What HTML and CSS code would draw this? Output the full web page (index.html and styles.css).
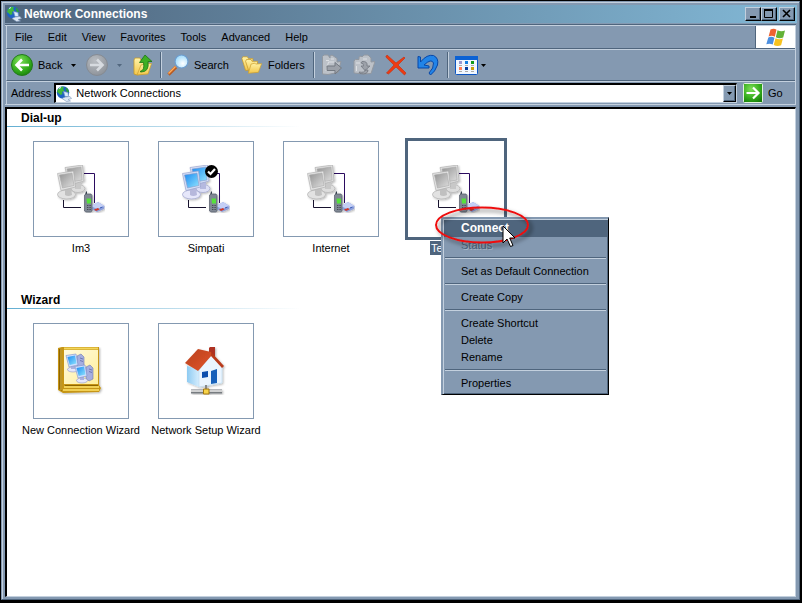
FILE: index.html
```html
<!DOCTYPE html>
<html lang="en">
<head>
<meta charset="utf-8">
<title>Network Connections</title>
<link rel="stylesheet" href="styles.css">
</head>
<body>
<svg class="defs" aria-hidden="true">
  <defs>
    <linearGradient id="gray-screen" x1="0" y1="0" x2="1" y2="1"><stop offset="0" stop-color="#949494"/><stop offset="1" stop-color="#dedede"/></linearGradient>
    <linearGradient id="blue-screen" x1="0" y1="0" x2="1" y2="1"><stop offset="0" stop-color="#1c8af0"/><stop offset="1" stop-color="#8fe4ff"/></linearGradient>
    <linearGradient id="gold" x1="0" y1="0" x2="1" y2="1"><stop offset="0" stop-color="#fffbe0"/><stop offset="1" stop-color="#ffee9a"/></linearGradient>
    <linearGradient id="folder" x1="0" y1="0" x2="0" y2="1"><stop offset="0" stop-color="#fff3a8"/><stop offset="1" stop-color="#f3c64a"/></linearGradient>
    <radialGradient id="green" cx=".4" cy=".3" r=".8"><stop offset="0" stop-color="#7fe05a"/><stop offset=".6" stop-color="#34ac1c"/><stop offset="1" stop-color="#147a08"/></radialGradient>
    <radialGradient id="gray-ball" cx=".4" cy=".3" r=".8"><stop offset="0" stop-color="#b9bdc2"/><stop offset="1" stop-color="#8a8f96"/></radialGradient>
    <radialGradient id="lens" cx=".6" cy=".65" r=".6"><stop offset="0" stop-color="#ffffff"/><stop offset="1" stop-color="#a6ddfb"/></radialGradient>
    <linearGradient id="roof" x1="0" y1="0" x2="1" y2="1"><stop offset="0" stop-color="#b8401c"/><stop offset="1" stop-color="#e2562c"/></linearGradient>
    <linearGradient id="wall" x1="0" y1="0" x2="1" y2="0"><stop offset="0" stop-color="#8ecbf2"/><stop offset="1" stop-color="#d5edfd"/></linearGradient>
    <filter id="soft" x="-20%" y="-20%" width="150%" height="150%"><feDropShadow dx="1" dy="1" stdDeviation="1" flood-opacity=".3"/></filter>
    <filter id="ring-shadow" x="-20%" y="-40%" width="150%" height="190%"><feDropShadow dx="3" dy="3" stdDeviation="2" flood-opacity=".55"/></filter>
    <symbol id="globe" viewBox="0 0 16 16">
      <circle cx="7" cy="6.5" r="6.2" fill="#1f63c4"/>
      <path d="M2 3 5 .7 8 1 7 3 8.5 4.500 6 6 6.500 8 4.500 9 2.500 7 1 6z" fill="#40b83c"/>
      <path d="M9.500 1.200 12 3 13 6 11 6.500 10 4z" fill="#2d9c3c"/>
      <path d="M3 2.500 5 1.500" stroke="#d6f6ff" stroke-width="1"/>
      <path d="M7.500 5.500 12 6.500 12.500 10.500 9 10.500z" fill="#d8ecff" stroke="#7594bb" stroke-width=".7"/>
      <path d="M9.500 11 14 10.500 15.500 12.500 12 13.500 14.500 15 10.500 15.500 6 12.500 8 11.500z" fill="#dbe7f4" stroke="#7c96b8" stroke-width=".6"/>
    </symbol>
    <symbol id="link-base" viewBox="0 0 48 48">
      <path d="M27 8.500h10.500V38" fill="none" stroke="#2b0b60"/>
      <path d="M6.500 35v7.500H24" fill="none" stroke="#17122e"/>
      <g filter="url(#soft)">
        <path d="M34 41 41 37 47.500 41 47 44 40 47 34 44z" fill="#8ea0da"/>
        <path d="M34 41 41 37 47.500 41 40 44z" fill="#c4cff6"/>
        <path d="M37 44.500 41 43 42.500 44.500 39 46z" fill="#cf3528"/><path d="M43 43 45.500 42" stroke="#385bb6"/>
        <path d="M29 26.500h1V30h-2z" fill="#333d4b"/>
        <path d="M27.500 30 29 29h5l1 1.500V46l-1.500 1H29l-1.500-1z" fill="#808894" stroke="#565e6b" stroke-width=".7"/>
        <path d="M29.500 33.500h4.500v5h-4z" fill="#55e13a"/>
        <path d="M30 40.500h4M30 42.500h4M30 44.500h4" stroke="#464c57" stroke-dasharray="1 .6"/>
      </g>
    </symbol>
    <symbol id="net-gray" viewBox="0 0 48 48">
      <use href="#link-base" width="48" height="48"/>
      <g filter="url(#soft)" stroke="#aaa" stroke-width=".6">
        <ellipse cx="21" cy="23.500" rx="7" ry="4" fill="#ddd"/>
        <path d="M18 17h6v7h-6z" fill="#c8c8c8" stroke="none"/>
        <path d="M8 2.500 25.500 0 27 16 12 20z" fill="#dedede"/>
        <path d="M10 4 24 2 25 15 13 17z" fill="url(#gray-screen)"/>
        <ellipse cx="9.500" cy="29.500" rx="9" ry="4.500" fill="#e2e2e2"/>
        <path d="M8 23h6l1 7q-4 2-7 0z" fill="#c0c0c0" stroke="none"/>
        <path d="M.5 8.500 16.500 6 18.500 22 4 25.500z" fill="#e4e4e4"/>
        <path d="M2.500 10 15 8 17 20.500 5.500 23z" fill="url(#gray-screen)"/>
      </g>
    </symbol>
    <symbol id="net-blue" viewBox="0 0 48 48">
      <use href="#link-base" width="48" height="48"/>
      <g filter="url(#soft)" stroke="#9298c6" stroke-width=".6">
        <ellipse cx="21" cy="23.500" rx="7" ry="4" fill="#dddff6"/>
        <path d="M18 17h6v7h-6z" fill="#b5b9df" stroke="none"/>
        <path d="M8 2.500 25.500 0 27 16 12 20z" fill="#d7e4fa"/>
        <path d="M10 4 24 2 25 15 13 17z" fill="url(#blue-screen)"/>
        <ellipse cx="9.500" cy="29.500" rx="9" ry="4.500" fill="#e6e7fa"/>
        <path d="M8 23h6l1 7q-4 2-7 0z" fill="#b6b8dc" stroke="none"/>
        <path d="M.5 8.500 16.500 6 18.500 22 4 25.500z" fill="#d4e2fa"/>
        <path d="M2.500 10 15 8 17 20.500 5.500 23z" fill="url(#blue-screen)"/>
      </g>
      <circle cx="29.500" cy="6.500" r="6.500" fill="#000"/>
      <path d="M26 6.500 28.500 9 33 4" fill="none" stroke="#fff" stroke-width="2.200"/>
    </symbol>
    <symbol id="mini-pc" viewBox="0 0 20 20">
      <path d="M12 3 16 1 19 4v11l-4 2-3-3z" fill="#a5aee0" stroke="#7078b0" stroke-width=".6"/>
      <path d="M15 5 18 6M15 7.500 18 8.500" stroke="#5661a2" stroke-width=".7"/>
      <ellipse cx="8" cy="16.500" rx="5.500" ry="2.500" fill="#e4e6fc" stroke="#8c94c8" stroke-width=".6"/>
      <path d="M6 12h4v4H6z" fill="#aab1de"/>
      <path d="M1 2.500 11 1 13 12 4 14z" fill="#cfdfff" stroke="#7d8ec8" stroke-width=".6"/>
      <path d="M2.500 4 10 2.500 11.500 10.500 4.700 12z" fill="url(#blue-screen)"/>
    </symbol>
    <symbol id="folder-open" viewBox="0 0 24 22">
      <path d="M1 4 2 2h5l1 2h5v12l-8 1z" fill="url(#folder)" stroke="#c79a2a" stroke-width=".8"/>
      <path d="M5 7 6 5h5l1 2h6v10l-9 2z" fill="url(#folder)" stroke="#c79a2a" stroke-width=".8"/>
      <path d="M8 20 11 10l4-1 1 1 6.500-.5L19 19z" fill="url(#folder)" stroke="#cfa232" stroke-width=".8"/>
    </symbol>
  </defs>
</svg>

<main class="window">
  <header class="titlebar">
    <svg class="icon16"><use href="#globe"/></svg>
    <h1 class="title">Network Connections</h1>
    <div class="controls">
      <button class="control" aria-label="Minimize"><svg viewBox="0 0 12 10"><path d="M3 8h6" stroke="#000" stroke-width="2"/></svg></button>
      <button class="control" aria-label="Maximize"><svg viewBox="0 0 12 10"><path d="M1.500 1v7.500h8V1" fill="none" stroke="#000"/><path d="M1 1h9" stroke="#000" stroke-width="2"/></svg></button>
      <button class="control control-close" aria-label="Close"><svg viewBox="0 0 12 10"><path d="M2 1 9 8M9 1 2 8" stroke="#000" stroke-width="1.600"/></svg></button>
    </div>
  </header>

  <div class="rebar">
    <div class="band menu-band">
      <nav class="menubar">
        <button>File</button><button>Edit</button><button>View</button><button>Favorites</button><button>Tools</button><button>Advanced</button><button>Help</button>
      </nav>
      <div class="brand">
        <svg viewBox="0 0 20 19">
          <path d="M4.500 1.500q3.500-1.500 6 .3L8.800 8.700q-3-1.700-6.200-.2z" fill="#ef6331"/>
          <path d="M11.500 2.300q3.500 1.800 7.500.3L17.200 9.500q-4 1.500-7.400-.3z" fill="#63b236"/>
          <path d="M2.300 9.500q3-1.500 6.200.3L6.700 16.500q-3-1.600-6.400-.2z" fill="#4b8fe0"/>
          <path d="M9.500 10.300q3.500 1.700 7.400.3l-1.800 6.700q-4 1.500-7.400-.4z" fill="#f7c21e"/>
        </svg>
      </div>
    </div>

    <div class="band toolbar">
      <button class="tool nav-back"><svg class="icon22" viewBox="0 0 22 22"><circle cx="11" cy="11" r="10.500" fill="url(#green)" stroke="#237a1c"/><path d="M18 11H6M11 5.500 5.500 11 11 16.500" fill="none" stroke="#fff" stroke-width="2.600"/></svg><span>Back</span><svg class="caret" viewBox="0 0 5 3"><path d="M0 0h5L2.500 3z"/></svg></button>
      <button class="tool nav-forward" aria-label="Forward" disabled><svg class="icon22" viewBox="0 0 22 22"><circle cx="11" cy="11" r="10.500" fill="url(#gray-ball)" stroke="#858b93"/><path d="M4 11H16M11 5.500 16.500 11 11 16.500" fill="none" stroke="#d7dbe0" stroke-width="2.600"/></svg><svg class="caret" viewBox="0 0 5 3"><path d="M0 0h5L2.500 3z" fill="#52677f"/></svg></button>
      <button class="tool nav-up" aria-label="Up"><svg class="icon22" viewBox="0 0 22 22"><path d="M2 6 3 4h5l1 2h7v12l-11 3-3-1z" fill="url(#folder)" stroke="#c79a2a" stroke-width=".8"/><path d="M5 21 9 11l4-1 6.500-.5L16 20z" fill="url(#folder)" stroke="#cfa232" stroke-width=".8"/><path d="M8 17.500q5-1 3.500-9H7.500L13 1l7 6.500h-4Q17.500 18 9 18z" fill="#3eaf24" stroke="#1b7512" stroke-width=".8"/></svg></button>
      <span class="divider"></span>
      <button class="tool search"><svg class="icon22" viewBox="0 0 22 22"><path d="M1.500 20.500 9 13" stroke="#b85c24" stroke-width="3.200"/><path d="M1.500 19.500 8.500 12.500" stroke="#ffad5c" stroke-width="1.500"/><circle cx="14.500" cy="7.500" r="6.500" fill="url(#lens)" stroke="#6c9ed0" stroke-width="1.200"/></svg><span>Search</span></button>
      <button class="tool folders"><svg class="icon22"><use href="#folder-open"/></svg><span>Folders</span></button>
      <span class="divider"></span>
      <button class="tool glyph" aria-label="Move To" disabled><svg class="icon22" viewBox="0 0 22 22"><path d="M1.500 20V2.500L3 1h4l2 3V2l2-1 5 3.500V8l4-.5-3 11L7 20.500z" fill="#bcc1c8" stroke="#9298a0"/><path d="M5 6.500h3M5 17 7.500 8H13M10 5h3" stroke="#dde0e4" fill="none"/><path d="M6 12h8V8.500L20.500 14 14 20v-3.500H6z" fill="#9ca1a9" stroke="#737981"/></svg></button>
      <button class="tool glyph" aria-label="Copy To" disabled><svg class="icon22" viewBox="0 0 22 22"><path d="M1 19V7l1.500-1.500H6V3l2-1 1 1 2-2h4l3 3v4l4-.5-4 12-7 .5z" fill="#bcc1c8" stroke="#9298a0"/><path d="M3 9h4M10 5h4M3.500 12v5" stroke="#dde0e4"/><path d="M9 7.500Q15 7 14 12h3l-5 4.500L8 12h2.500Q11 9 8 9zM6 18q6 1 6-2h3q0 5-8 3.500z" fill="#9ca1a9" stroke="#737981" stroke-width=".8"/></svg></button>
      <button class="tool glyph" aria-label="Delete"><svg class="icon22" viewBox="0 0 22 22"><path d="M2 1 11 9 19 3l1 1-7 7 8 8-1.500 2L11 13 3.500 20 1.500 19 9 11 .8 3z" fill="#ee3b12" stroke="#c82b0a" stroke-width=".6"/></svg></button>
      <button class="tool glyph" aria-label="Undo"><svg class="icon22" viewBox="0 0 22 22"><path d="M1 2.500 3.500 3v5Q10 0 16.500 1.500 22 4 20.500 11 18 18 13.500 21L12 19q5-5 4.500-10-2-5-9.500 2l5 1v2H1z" fill="#2184e8" stroke="#0747a8"/></svg></button>
      <span class="divider"></span>
      <button class="tool views" aria-label="Views"><svg class="views-icon" viewBox="0 0 23 19"><rect x=".5" y=".5" width="22" height="18" rx="1" fill="#f1f7ff" stroke="#0c56c4"/><path d="M0 0h23v4H0z" fill="#0b62d4"/><path d="M4 5h3v3H4z" fill="#9898d0"/><path d="M10 5h3v3h-3z" fill="#147ee0"/><path d="M16 5h3v3h-3z" fill="#139a18"/><path d="M4 11h3v3H4z" fill="#ff7d55"/><path d="M10 11h3v3h-3z" fill="#083e9b"/><path d="M16 11h3v3h-3z" fill="#cba009"/><path d="M4 9.500h3m3 0h3m3 0h3M4 15.500h3m3 0h3m3 0h3" stroke="#aaa"/></svg><svg class="caret" viewBox="0 0 5 3"><path d="M0 0h5L2.500 3z"/></svg></button>
    </div>

    <div class="band address-band">
      <label for="address">Address</label>
      <div class="combo">
        <svg class="icon16"><use href="#globe"/></svg>
        <input id="address" type="text" value="Network Connections">
        <button class="drop" aria-label="Show addresses"><svg class="caret" viewBox="0 0 5 3"><path d="M0 0h5L2.500 3z"/></svg></button>
      </div>
      <button class="go"><svg class="go-icon" viewBox="0 0 20 20"><rect x=".5" y=".5" width="19" height="19" rx="1" fill="url(#green)" stroke="#e2f3df"/><path d="M3.500 10H15M10 4.500 15.500 10 10 15.500" fill="none" stroke="#fff" stroke-width="2.200"/></svg><span>Go</span></button>
    </div>
  </div>

  <div class="content">
    <section class="group">
      <h2>Dial-up</h2>
      <ul class="tiles">
        <li><span class="tile"><svg><use href="#net-gray"/></svg></span><span class="name">Im3</span></li>
        <li><span class="tile"><svg><use href="#net-blue"/></svg></span><span class="name">Simpati</span></li>
        <li><span class="tile"><svg><use href="#net-gray"/></svg></span><span class="name">Internet</span></li>
        <li class="selected"><span class="tile"><svg><use href="#net-gray"/></svg></span><span class="name">Telkomnet</span>
          <div class="context-menu" role="menu">
            <button role="menuitem" class="active">Connect</button>
            <button role="menuitem" disabled>Status</button>
            <hr>
            <button role="menuitem">Set as Default Connection</button>
            <hr>
            <button role="menuitem">Create Copy</button>
            <hr>
            <button role="menuitem">Create Shortcut</button>
            <button role="menuitem">Delete</button>
            <button role="menuitem">Rename</button>
            <hr>
            <button role="menuitem">Properties</button>
          </div>
          <svg class="ring" viewBox="0 0 104 50"><ellipse cx="48" cy="20" rx="46" ry="17.500" fill="none" stroke="#ee1010" stroke-width="2" filter="url(#ring-shadow)"/></svg>
          <svg class="pointer" viewBox="0 0 14 23"><path d="M1 1v17l4-4 3.500 7.500 2.500-1L7.700 13H13z" fill="#fff" stroke="#000"/></svg>
        </li>
      </ul>
    </section>
    <section class="group">
      <h2>Wizard</h2>
      <ul class="tiles">
        <li><span class="tile"><svg viewBox="0 0 48 48"><g filter="url(#soft)"><path d="M1 1 5 0h37v38l2 3-2 4-36 1-5-3z" fill="#c69512"/><path d="M2 2h3v42l-3-2z" fill="#8f6504"/><path d="M4 2v41" stroke="#ecc749"/><path d="M7 3h34v34H7z" fill="url(#gold)"/><path d="M7 1.500h34" stroke="#f2d65c" stroke-width="2"/><path d="M7 40h35M6 43h36" stroke="#ffe36b" stroke-width="1.500"/><path d="M8 38.500h33" stroke="#8f6504"/></g><use href="#mini-pc" x="8" y="6" width="20" height="20"/><use href="#mini-pc" x="17" y="17" width="20" height="20"/></svg></span><span class="name">New Connection Wizard</span></li>
        <li><span class="tile"><svg viewBox="0 0 48 48"><g filter="url(#soft)"><path d="M27 1 28 0h5v16h-6z" fill="#ae3220"/><path d="M5 19 17 22v18L5 35z" fill="url(#wall)"/><path d="M17 23 29 8 40 20v16L17 40z" fill="#eaf5ff" stroke="#b9d9ef" stroke-width=".6"/><path d="M3 16 16 2 29 5 30 8 16 24z" fill="url(#roof)"/><path d="M29 5 42 19 40 21 29 9z" fill="#b93b1a"/><path d="M20 25 26 24v6l-6 1z" fill="#0a4fae"/><path d="M29 24 35 22v14l-6 1z" fill="#1260ba"/><path d="M24 38v5" stroke="#888" stroke-width="2"/><path d="M9 44.500h31" stroke="#777b80" stroke-width="4"/><path d="M9 44h31" stroke="#eee" stroke-width="1.500"/><path d="M21.500 42h5.500v5h-5.500z" fill="#f7d34a" stroke="#a37811"/></g></svg></span><span class="name">Network Setup Wizard</span></li>
      </ul>
    </section>
  </div>
</main>
</body>
</html>
```
FILE: styles.css
```css
:root {
  --face: #8499b1;
  --light: #c3d0de;
  --dark: #4f657d;
}
* { box-sizing: border-box; }
body {
  margin: 0;
  padding: 1px 2px 3px 1px;
  height: 100vh;
  background: #000;
  color: #000;
  font: 11px/13px "Liberation Sans", Arial, sans-serif;
}
svg { display: block; flex: none; }
button, input {
  margin: 0;
  padding: 0;
  border: 0;
  background: none;
  color: inherit;
  font: inherit;
}
.defs { position: absolute; width: 0; height: 0; }
.icon16 { width: 16px; height: 16px; }
.icon22 { width: 22px; height: 22px; }
.caret { width: 5px; height: 3px; }

.window {
  display: flex;
  flex-direction: column;
  height: 100%;
  padding: 3px 2px 2px 3px;
  background: var(--face);
  border: 1px solid var(--face);
  border-right-color: var(--dark);
  border-bottom-color: var(--dark);
  box-shadow: inset 1px 1px var(--light);
}

.titlebar {
  display: flex;
  align-items: center;
  flex: none;
  height: 18px;
  padding: 0 2px 0 1px;
  background: linear-gradient(90deg, #4f657d, #82b8d6);
}
.title {
  flex: 1;
  margin: 0 0 0 2px;
  color: #fff;
  font-size: 12px;
  line-height: 18px;
}
.controls { display: flex; }
.control {
  width: 16px;
  height: 14px;
  padding: 1px;
  background: var(--face);
  border: 1px solid #000;
  border-top-color: var(--light);
  border-left-color: var(--light);
  box-shadow: inset -1px -1px var(--dark);
}
.control svg { width: 12px; height: 10px; }
.control-close { margin-left: 2px; }

.rebar {
  flex: none;
  margin: 2px 1px 0 0;
  border: 1px solid var(--light);
  border-left: 0;
  box-shadow: 0 -1px var(--dark);
}
.band {
  display: flex;
  align-items: center;
  margin-left: 1px;
  border-left: 1px solid var(--light);
}
.menu-band {
  height: 23px;
  border-bottom: 1px solid var(--dark);
}
.menubar { display: flex; flex: 1; }
.menubar button { padding: 0 7px 0 8px; }
.brand {
  display: grid;
  place-items: center;
  align-self: stretch;
  width: 40px;
  background: #fff;
  border-left: 1px solid var(--dark);
}
.brand svg { width: 20px; height: 19px; }

.toolbar {
  height: 32px;
  padding-left: 4px;
  border-top: 1px solid var(--light);
  border-bottom: 1px solid var(--dark);
}
.tool {
  display: flex;
  align-items: center;
  gap: 5px;
}
.nav-back { width: 75px; }
.nav-back .caret { margin-left: 4px; }
.nav-forward { width: 46px; gap: 9px; }
.divider {
  width: 2px;
  height: 26px;
  background: var(--dark);
  border-right: 1px solid var(--light);
}
.nav-up { width: 28px; }
.search { width: 74px; margin-left: 5px; }
.folders { width: 72px; }
.glyph { width: 32px; padding-left: 6px; }
.glyph + .divider { margin-left: 4px; }
.views { margin-left: 6px; gap: 3px; }
.views-icon { width: 23px; height: 19px; }

.address-band {
  height: 23px;
  padding-left: 4px;
  border-top: 1px solid var(--light);
}
.combo {
  display: flex;
  flex: 1;
  align-items: center;
  height: 20px;
  margin-left: 3px;
  background: #fff;
  border: 1px solid var(--light);
  border-top: 2px solid #000;
  border-left: 2px solid #000;
}
.combo input {
  flex: 1;
  min-width: 0;
  padding-left: 4px;
  outline: 0;
}
.drop {
  display: grid;
  place-items: center;
  align-self: stretch;
  width: 13px;
  background: var(--face);
  border: 1px solid #000;
  border-top-color: var(--light);
  border-left-color: var(--light);
  box-shadow: inset -1px -1px var(--dark);
}
.go {
  display: flex;
  align-items: center;
  gap: 5px;
  width: 58px;
  padding-left: 6px;
}
.go-icon { width: 20px; height: 20px; }

.content {
  position: relative;
  flex: 1;
  min-height: 0;
  margin: 2px 1px 0 0;
  background: #fff;
  border-style: solid;
  border-width: 2px 1px 1px 2px;
  border-color: #000 var(--light) var(--light) #000;
}
.group { margin-bottom: 36px; }
.group h2 {
  margin: 0 0 14px;
  padding: 3px 0 1px 14px;
  font-size: 12px;
  line-height: 13px;
  border-bottom: 1px solid;
  border-image: linear-gradient(90deg, #62aed2, #fff 294px) 1;
}
.tiles {
  display: grid;
  grid-template-columns: repeat(auto-fill, 124px);
  gap: 1px;
  margin: 0;
  padding: 0 0 0 12px;
  list-style: none;
}
.tiles li {
  position: relative;
  display: flex;
  flex-direction: column;
  align-items: center;
  gap: 4px;
}
.tile {
  display: grid;
  place-items: center;
  width: 96px;
  height: 96px;
  border: 1px solid var(--face);
}
.tile svg { width: 48px; height: 48px; }
.name { padding: 0 1px; line-height: 14px; white-space: nowrap; }
.selected .tile {
  border-color: #fff;
  box-shadow: 0 0 0 3px var(--dark);
}
.selected .name { background: var(--dark); color: #fff; }

.context-menu {
  position: absolute;
  top: 76px;
  left: 47px;
  width: 168px;
  padding: 1px 1px 2px;
  background: var(--face);
  border: 2px solid var(--face);
  border-right: 1px solid #000;
  border-bottom: 1px solid #000;
  box-shadow: inset 1px 1px var(--light), inset -1px -1px var(--dark);
}
.context-menu button {
  display: block;
  width: 100%;
  height: 17px;
  padding-left: 17px;
  text-align: left;
}
.context-menu .active {
  background: var(--dark);
  color: #fff;
  font-size: 12px;
  font-weight: bold;
}
.context-menu button:disabled {
  color: var(--dark);
  text-shadow: 1px 1px #a9b9ca;
}
.context-menu hr {
  height: 2px;
  margin: 3px 1px 4px;
  border: 0;
  border-top: 1px solid var(--dark);
  border-bottom: 1px solid var(--light);
}
.ring {
  position: absolute;
  top: 64px;
  left: 40px;
  width: 104px;
  height: 50px;
}
.pointer {
  position: absolute;
  top: 84px;
  left: 108px;
  width: 14px;
  height: 23px;
}
```
